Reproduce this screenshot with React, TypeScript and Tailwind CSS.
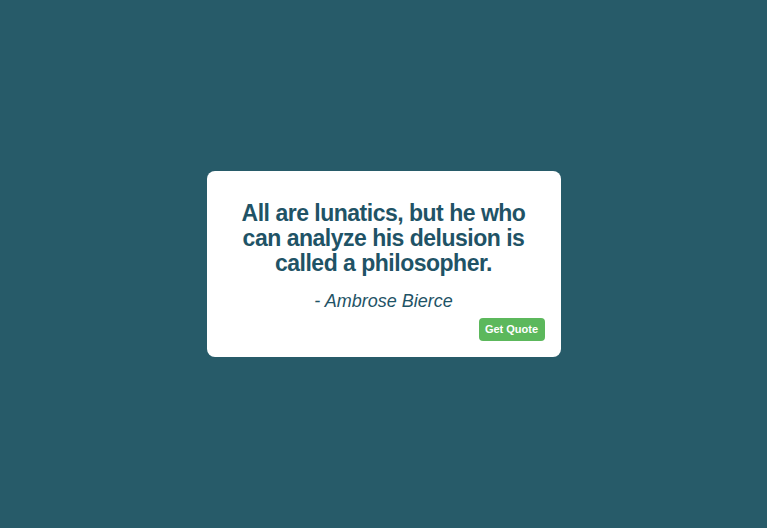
export default function App() {
  return (
    <div className="min-h-screen w-full bg-[#275b69] flex items-center justify-center font-['Liberation_Sans',Arial,sans-serif]">
      {/* Quote card */}
      <div className="w-[354px] bg-white rounded-lg px-4 pt-[30px] pb-4">
        <p className="text-center text-[23px] leading-[25px] font-bold tracking-[-0.5px] text-[#1f5366]">
          All are lunatics, but he who can analyze his delusion is called a philosopher.
        </p>
        <p className="mt-[13px] text-center text-[18px] leading-6 italic text-[#1f5366]">
          - Ambrose Bierce
        </p>
        <div className="mt-[5px] flex justify-end">
          <button className="h-[23px] w-[66px] rounded bg-[#5cb85c] text-white text-[11px] font-bold leading-none">
            Get Quote
          </button>
        </div>
      </div>
    </div>
  );
}
